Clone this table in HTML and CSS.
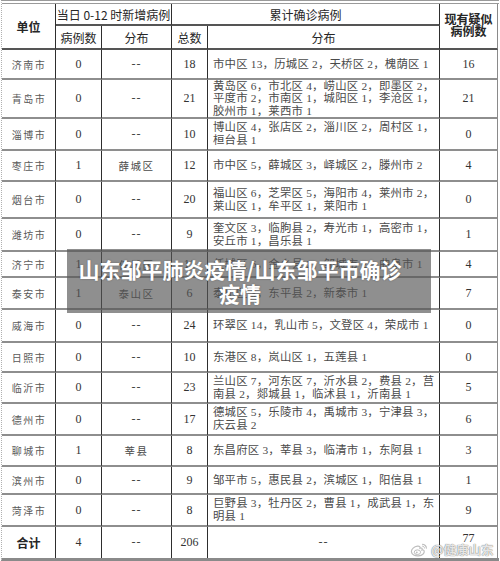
FILE: index.html
```html
<!DOCTYPE html>
<html lang="zh-CN">
<head>
<meta charset="utf-8">
<title>山东邹平肺炎疫情</title>
<link rel="stylesheet" href="styles.css">
</head>
<body>
<div class="page">
  <div class="sheet">
    <div class="c h bold span-r2">单位</div>
    <div class="c h span-c2">当日 0-12 时新增病例</div>
    <div class="c h span-c2">累计确诊病例</div>
    <div class="c h bold span-r2 wrap">现有疑似<br>病例数</div>
    <div class="c h">病例数</div>
    <div class="c h">分布</div>
    <div class="c h">总数</div>
    <div class="c h">分布</div>

    <div class="c city">济南市</div><div class="c num">0</div><div class="c num dash">--</div><div class="c num">18</div><div class="c dist">市中区 13，历城区 2，天桥区 2，槐荫区 1</div><div class="c num last">16</div>

    <div class="c city">青岛市</div><div class="c num">0</div><div class="c num dash">--</div><div class="c num">21</div><div class="c dist">黄岛区 6，市北区 4，崂山区 2，即墨区 2，<br>平度市 2，市南区 1，城阳区 1，李沧区 1，<br>胶州市 1，莱西市 1</div><div class="c num last">21</div>

    <div class="c city">淄博市</div><div class="c num">0</div><div class="c num dash">--</div><div class="c num">10</div><div class="c dist">博山区 4，张店区 2，淄川区 2，周村区 1，<br>桓台县 1</div><div class="c num last">0</div>

    <div class="c city">枣庄市</div><div class="c num">1</div><div class="c dist-c">薛城区</div><div class="c num">12</div><div class="c dist">市中区 5，薛城区 3，峄城区 2，滕州市 2</div><div class="c num last">4</div>

    <div class="c city">烟台市</div><div class="c num">0</div><div class="c num dash">--</div><div class="c num">20</div><div class="c dist">福山区 6，芝罘区 5，海阳市 4，莱州市 2，<br>莱山区 1，牟平区 1，莱阳市 1</div><div class="c num last">0</div>

    <div class="c city">潍坊市</div><div class="c num">0</div><div class="c num dash">--</div><div class="c num">9</div><div class="c dist">奎文区 3，临朐县 2，寿光市 1，高密市 1，<br>安丘市 1，昌乐县 1</div><div class="c num last">1</div>

    <div class="c city">济宁市</div><div class="c num">1</div><div class="c dist-c">任城区</div><div class="c num">11</div><div class="c dist">任城区 6，金乡县 2，邹城市 2，曲阜市 1</div><div class="c num last">4</div>

    <div class="c city">泰安市</div><div class="c num">1</div><div class="c dist-c">泰山区</div><div class="c num">6</div><div class="c dist">泰山区 3，东平县 2，新泰市 1</div><div class="c num last">7</div>

    <div class="c city">威海市</div><div class="c num">0</div><div class="c num dash">--</div><div class="c num">24</div><div class="c dist">环翠区 14，乳山市 5，文登区 4，荣成市 1</div><div class="c num last">0</div>

    <div class="c city">日照市</div><div class="c num">0</div><div class="c num dash">--</div><div class="c num">10</div><div class="c dist">东港区 8，岚山区 1，五莲县 1</div><div class="c num last">0</div>

    <div class="c city">临沂市</div><div class="c num">0</div><div class="c num dash">--</div><div class="c num">23</div><div class="c dist">兰山区 7，河东区 7，沂水县 2，费县 2，莒<br>南县 2，郯城县 1，临沭县 1，沂南县 1</div><div class="c num last">5</div>

    <div class="c city">德州市</div><div class="c num">0</div><div class="c num dash">--</div><div class="c num">17</div><div class="c dist">德城区 5，乐陵市 4，禹城市 3，宁津县 3，<br>庆云县 2</div><div class="c num last">6</div>

    <div class="c city">聊城市</div><div class="c num">1</div><div class="c dist-c">莘县</div><div class="c num">8</div><div class="c dist">东昌府区 3，莘县 3，临清市 1，东阿县 1</div><div class="c num last">3</div>

    <div class="c city">滨州市</div><div class="c num">0</div><div class="c num dash">--</div><div class="c num">9</div><div class="c dist">邹平市 5，惠民县 2，滨城区 1，阳信县 1</div><div class="c num last">1</div>

    <div class="c city">菏泽市</div><div class="c num">0</div><div class="c num dash">--</div><div class="c num">8</div><div class="c dist">巨野县 3，牡丹区 2，曹县 1，成武县 1，东<br>明县 1</div><div class="c num last">9</div>

    <div class="c h bold end">合计</div><div class="c num end">4</div><div class="c num dash end">--</div><div class="c num end">206</div><div class="c num dash end">--</div><div class="c num last end total">77</div>
  </div>

  <div class="title-box">
    <div class="title">山东邹平肺炎疫情/山东邹平市确诊<br>疫情</div>
  </div>

  <div class="mark">
    <svg class="weibo" width="18" height="14" viewBox="0 0 18 14">
      <path d="M7.5 3.2C4.2 3.6 1.2 6 1.4 8.8 1.6 11.6 5 13.2 8.6 12.8 12.2 12.4 14.6 10.4 14.2 8.2 14 7 12.8 6.6 12 6.9 12.6 5.4 11.8 4.6 10 5.2 10.4 3.8 9.2 3 7.5 3.2Z" fill="none" stroke="#bdbdbd" stroke-width="1.2"/>
      <ellipse cx="7.4" cy="9.2" rx="3.2" ry="2.3" fill="none" stroke="#bdbdbd" stroke-width="1"/>
      <circle cx="6.8" cy="9.4" r="0.9" fill="#bdbdbd"/>
      <path d="M12 1.2C14.6 1.2 16.6 3.2 16.4 5.6" fill="none" stroke="#bdbdbd" stroke-width="1.1"/>
      <path d="M12.2 3.1C13.6 3.1 14.6 4.2 14.5 5.4" fill="none" stroke="#bdbdbd" stroke-width="1"/>
    </svg>
    <span class="mark-text">@健康山东</span>
  </div>
</div>
</body>
</html>
```

FILE: styles.css
```css
html, body {
  margin: 0;
  padding: 0;
  background: #ffffff;
}

.page {
  position: relative;
  width: 500px;
  height: 561px;
  overflow: hidden;
  background: #ffffff;
}

.sheet {
  margin-left: 1px;
  width: 497px;
  border-left: 1px dotted #b0b0b0;
  border-top: 4px double #9a9a9a;
  border-bottom: 3px solid #8a8a8a;
  display: grid;
  grid-template-columns: 54px 46px 70px 36px 232px 58px;
  grid-template-rows: 22px 24px 30px 39px 32px 31px 37px 33px 26px 32px 33px 30px 31px 32px 31px 28px 32px 31px;
  font-family: "Liberation Serif", "Noto Sans CJK SC", serif;
  color: #3a3a3a;
}

.c {
  box-sizing: border-box;
  display: flex;
  align-items: center;
  justify-content: center;
  border-right: 1px solid #2e2e2e;
  border-bottom: 2px solid #8e8e8e;
  white-space: nowrap;
  overflow: hidden;
}

.c.end {
  border-bottom: none;
}

.c.last {
  border-right: 1px solid #8a8a8a;
}

.h {
  font-family: "Noto Sans CJK SC", sans-serif;
  font-size: 12px;
  color: #262626;
  border-bottom-color: #555555;
}

.bold {
  font-weight: bold;
}

.span-r2 {
  grid-row: span 2;
}

.span-c2 {
  grid-column: span 2;
}

.wrap {
  text-align: center;
  line-height: 12px;
  white-space: normal;
  border-right: 1px solid #8a8a8a;
  padding-bottom: 2px;
}

.city {
  font-family: "Noto Sans CJK SC", sans-serif;
  font-size: 10px;
  letter-spacing: 1.5px;
  padding-left: 1px;
  color: #5a5a5a;
}

.num {
  font-size: 12px;
  color: #333333;
}

.dash {
  letter-spacing: 1px;
  color: #444444;
}

.total {
  padding-bottom: 8px;
}

.dist-c {
  font-family: "Noto Sans CJK SC", sans-serif;
  font-size: 10.5px;
  letter-spacing: 1.5px;
  color: #4a4a4a;
}

.dist {
  justify-content: flex-start;
  padding-left: 5px;
  font-size: 11.4px;
  letter-spacing: 0.2px;
  line-height: 12.6px;
  color: #4a4a4a;
}

.title-box {
  position: absolute;
  left: 67px;
  top: 249px;
  width: 364px;
  height: 64px;
  box-sizing: border-box;
  padding: 0 22px 0 4px;
  background: rgba(85, 85, 85, 0.66);
  display: flex;
  align-items: center;
  justify-content: center;
}

.title {
  font-family: "Noto Sans CJK SC", sans-serif;
  font-weight: bold;
  font-size: 21px;
  line-height: 24px;
  color: #ffffff;
  text-align: center;
  text-shadow: 0 0 2px rgba(0, 0, 0, 0.3);
}

.mark {
  position: absolute;
  left: 410px;
  top: 543px;
  display: flex;
  align-items: center;
  gap: 3px;
}

.mark-text {
  font-family: "Noto Sans CJK SC", sans-serif;
  font-size: 12.5px;
  font-weight: bold;
  color: rgba(255, 255, 255, 0.85);
  text-shadow: 0 0 1px rgba(0, 0, 0, 0.5), 0 0 1px rgba(0, 0, 0, 0.35);
  line-height: 14px;
}
```
